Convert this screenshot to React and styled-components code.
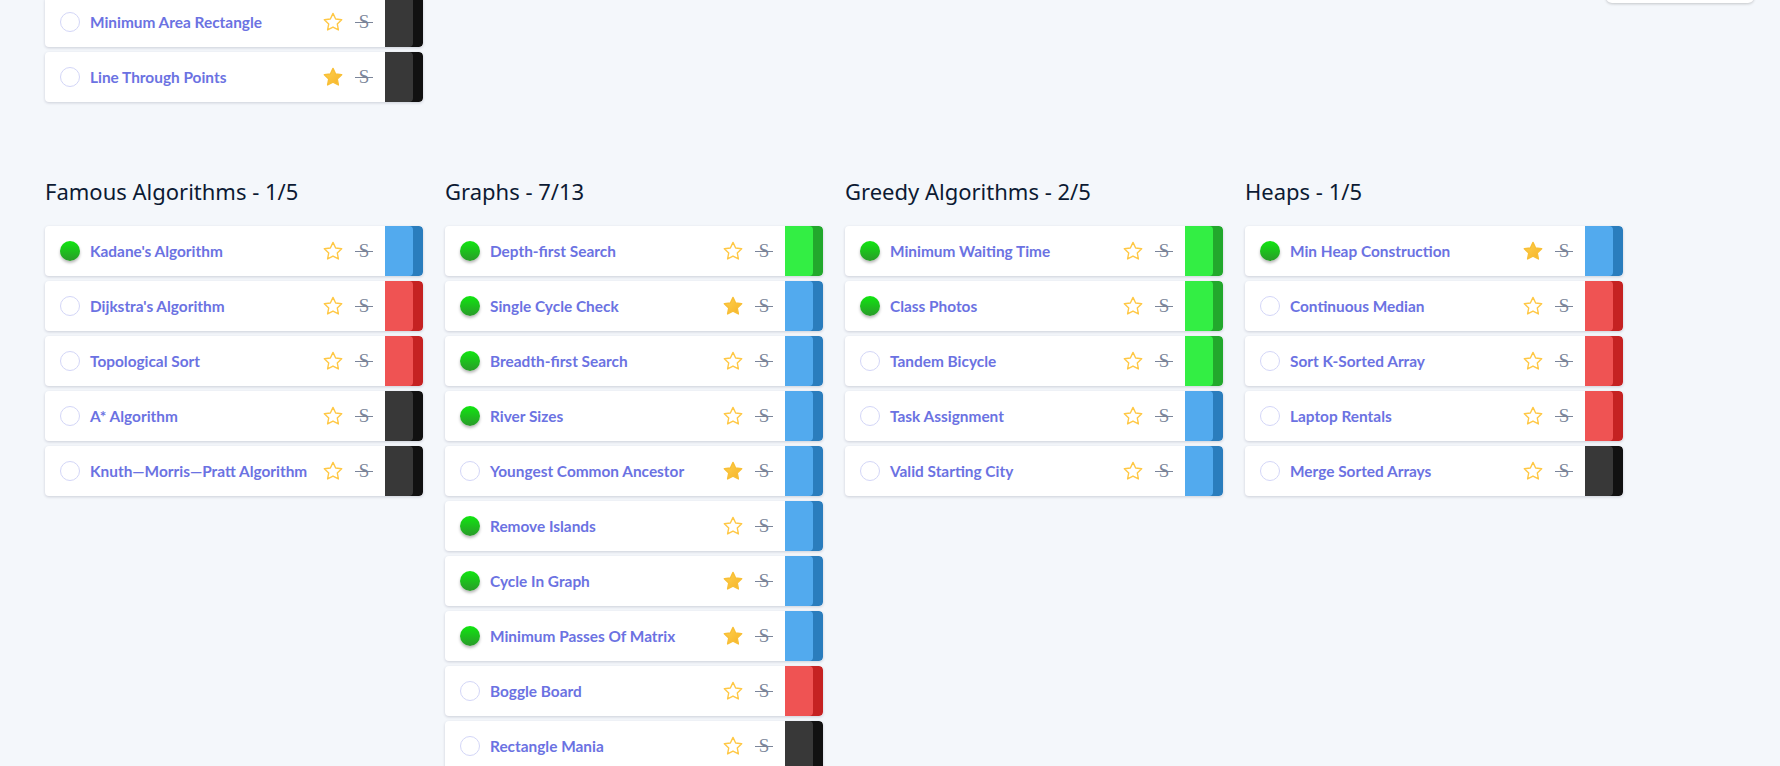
import React from 'react'
import styled, { createGlobalStyle } from 'styled-components'

const GlobalStyle = createGlobalStyle`
    html, body {
        margin: 0;
        padding: 0;
        background: #f4f7fb;
    }
    body {
        font-family: "Lato", "Liberation Sans", sans-serif;
    }
`

const palette = {
    blue: ['#52aaee', '#2a7dbd'],
    red: ['#ef5353', '#c52222'],
    green: ['#33ee44', '#22a82c'],
    black: ['#383838', '#111111'],
}

const topItems = [
    { name: 'Minimum Area Rectangle', color: 'black' },
    { name: 'Line Through Points', color: 'black', starred: true },
]

const sections = [
    {
        title: 'Famous Algorithms - 1/5',
        items: [
            { name: "Kadane's Algorithm", color: 'blue', done: true },
            { name: "Dijkstra's Algorithm", color: 'red' },
            { name: 'Topological Sort', color: 'red' },
            { name: 'A* Algorithm', color: 'black' },
            { name: 'Knuth—Morris—Pratt Algorithm', color: 'black' },
        ],
    },
    {
        title: 'Graphs - 7/13',
        items: [
            { name: 'Depth-first Search', color: 'green', done: true },
            { name: 'Single Cycle Check', color: 'blue', done: true, starred: true },
            { name: 'Breadth-first Search', color: 'blue', done: true },
            { name: 'River Sizes', color: 'blue', done: true },
            { name: 'Youngest Common Ancestor', color: 'blue', starred: true },
            { name: 'Remove Islands', color: 'blue', done: true },
            { name: 'Cycle In Graph', color: 'blue', done: true, starred: true },
            { name: 'Minimum Passes Of Matrix', color: 'blue', done: true, starred: true },
            { name: 'Boggle Board', color: 'red' },
            { name: 'Rectangle Mania', color: 'black' },
            { name: 'Airport Connections', color: 'black' },
            { name: 'Detect Arbitrage', color: 'black' },
            { name: 'Two-Edge-Connected Graph', color: 'black' },
        ],
    },
    {
        title: 'Greedy Algorithms - 2/5',
        items: [
            { name: 'Minimum Waiting Time', color: 'green', done: true },
            { name: 'Class Photos', color: 'green', done: true },
            { name: 'Tandem Bicycle', color: 'green' },
            { name: 'Task Assignment', color: 'blue' },
            { name: 'Valid Starting City', color: 'blue' },
        ],
    },
    {
        title: 'Heaps - 1/5',
        items: [
            { name: 'Min Heap Construction', color: 'blue', done: true, starred: true },
            { name: 'Continuous Median', color: 'red' },
            { name: 'Sort K-Sorted Array', color: 'red' },
            { name: 'Laptop Rentals', color: 'red' },
            { name: 'Merge Sorted Arrays', color: 'black' },
        ],
    },
]

function Star({ filled }) {
    return (
        <StarSvg viewBox="0 0 24 24">
            <defs>
                <linearGradient id="starFill" x1="0" y1="0" x2="1" y2="1">
                    <stop offset="0" stopColor="#ffd24d" />
                    <stop offset="1" stopColor="#f5b22a" />
                </linearGradient>
            </defs>
            <path
                d="M12 2.6l2.9 6.1 6.6.85-4.85 4.6 1.25 6.55L12 17.5l-5.9 3.2 1.25-6.55L2.5 9.55l6.6-.85z"
                fill={filled ? 'url(#starFill)' : 'none'}
                stroke={filled ? '#f8bf36' : '#ffc845'}
                strokeWidth="1.5"
                strokeLinejoin="round"
            />
        </StarSvg>
    )
}

function Question({ item }) {
    const [light, dark] = palette[item.color]
    return (
        <Card>
            <Check done={item.done} />
            <Name>{item.name}</Name>
            <Star filled={item.starred} />
            <Strike>S</Strike>
            <Difficulty dark={dark}>
                <DifficultyFace light={light} />
            </Difficulty>
        </Card>
    )
}

function App() {
    return (
        <Page>
            <GlobalStyle />
            <TopRow>
                <Column>
                    {topItems.map(q => <Question key={q.name} item={q} />)}
                </Column>
                <CornerBox />
            </TopRow>
            <Grid>
                {sections.map(s => (
                    <Column key={s.title}>
                        <Heading>{s.title}</Heading>
                        {s.items.map(q => <Question key={q.name} item={q} />)}
                    </Column>
                ))}
            </Grid>
        </Page>
    )
}

export default App

const Page = styled.div`
    padding: 0 26px 40px 45px;
    height: 766px;
    overflow: hidden;
    box-sizing: border-box;
`
const TopRow = styled.div`
    display: flex;
    justify-content: space-between;
    align-items: flex-start;
    margin-top: -3px;
`
const CornerBox = styled.div`
    width: 148px;
    height: 40px;
    margin-top: -34px;
    background: #fff;
    border-radius: 6px;
    box-shadow: 0 1px 3px rgba(0, 0, 0, 0.2);
`
const Grid = styled.div`
    display: grid;
    grid-template-columns: repeat(4, 378px);
    column-gap: 22px;
    margin-top: 70px;
`
const Column = styled.div`
    display: flex;
    flex-direction: column;
    width: 378px;
`
const Heading = styled.h2`
    margin: 0 0 21px;
    height: 28px;
    font-family: "Noto Sans", "Open Sans", sans-serif;
    font-size: 22px;
    line-height: 28px;
    font-weight: 400;
    color: #0c1a33;
`
const Card = styled.div`
    display: flex;
    align-items: center;
    height: 50px;
    margin-bottom: 5px;
    padding-left: 15px;
    background: #fff;
    border-radius: 4px;
    box-shadow: 0 1px 3px rgba(20, 30, 60, 0.18);
    overflow: hidden;
`
const Check = styled.span`
    flex: none;
    width: 20px;
    height: 20px;
    box-sizing: border-box;
    border-radius: 50%;
    border: ${p => p.done ? 'none' : '1px solid #d3d6f7'};
    background: ${p => p.done ? 'linear-gradient(#10e610, #2a9a2a)' : '#fff'};
    box-shadow: ${p => p.done ? '0 2px 3px rgba(0, 0, 0, 0.28)' : 'none'};
`
const Name = styled.span`
    flex: 1;
    margin-left: 10px;
    font-size: 15.4px;
    font-weight: 700;
    color: #6b72e2;
    white-space: nowrap;
`
const StarSvg = styled.svg`
    flex: none;
    width: 22px;
    height: 22px;
`
const Strike = styled.span`
    position: relative;
    flex: none;
    width: 16px;
    margin: 0 13px 0 12px;
    font-family: "Liberation Serif", serif;
    font-size: 19px;
    line-height: 20px;
    color: #7b8599;
    text-align: center;
    &::after {
        content: '';
        position: absolute;
        left: -1px;
        right: -1px;
        top: 10px;
        height: 1px;
        background: #7b8599;
    }
`
const Difficulty = styled.div`
    flex: none;
    align-self: stretch;
    width: 38px;
    background: ${p => p.dark};
    border-radius: 0 4px 4px 0;
`
const DifficultyFace = styled.div`
    width: 28px;
    height: 100%;
    background: ${p => p.light};
    border-radius: 0 4px 4px 0;
`
